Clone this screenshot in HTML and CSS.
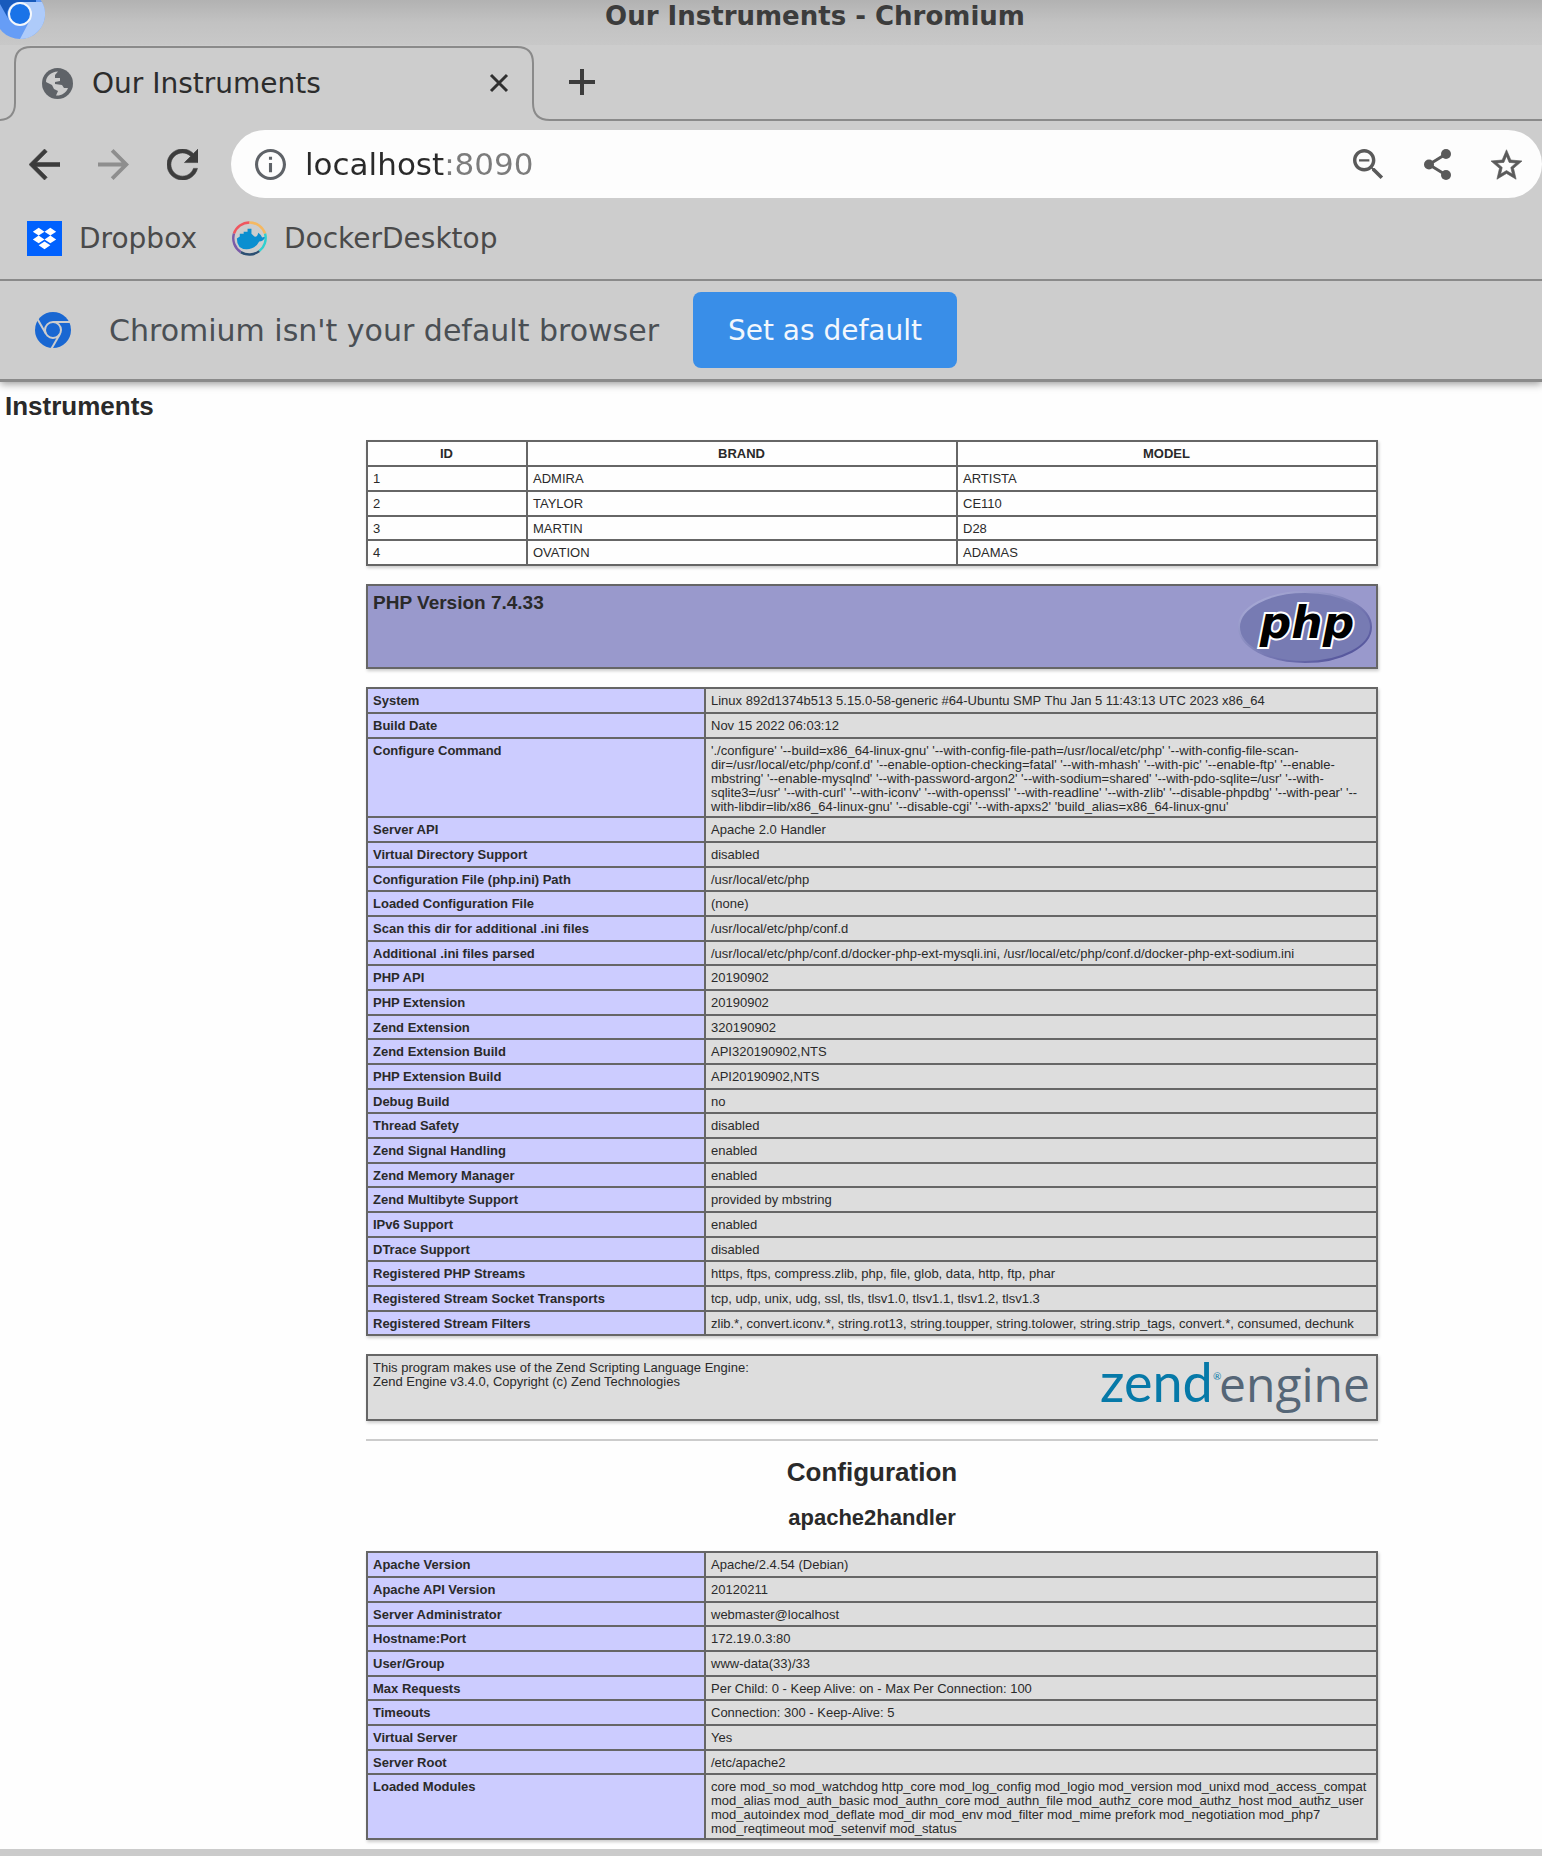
FILE: index.html
```html
<!DOCTYPE html>
<html lang="en">
<head>
<meta charset="utf-8">
<title>Our Instruments</title>
<link rel="stylesheet" href="styles.css">
</head>
<body>
<header class="browser">
  <div class="titlebar">
    <svg class="app-icon" viewBox="0 0 45 40" aria-hidden="true">
      <circle cx="20" cy="14" r="25" fill="#669df6"/>
      <path d="M20 2H42A25 25 0 0 1 20 39L30 20Z" fill="#aecbfa"/>
      <path d="M0 0H36V2H20A12 12 0 0 0 9 20L0 4Z" fill="#185abc"/>
      <circle cx="20" cy="14" r="11" fill="#1a73e8" stroke="#f4f7fb" stroke-width="2"/>
    </svg>
    <p class="window-title">Our Instruments - Chromium</p>
  </div>
  <div class="tabstrip">
    <div class="tab">
      <svg class="tab-shape" viewBox="0 0 550 76" aria-hidden="true"><path d="M0 75Q15 74 15 58V18Q15 2 31 2H517Q533 2 533 18V58Q533 75 550 75" fill="none" stroke="#8a8a8a" stroke-width="2"/></svg>
      <svg class="globe" viewBox="0 0 31 31" aria-hidden="true"><circle cx="15.500" cy="15.500" r="15.500" fill="#5f6368"/><path fill="#cdcdcd" d="M4 14C4 8 9 4 16 3.500L13 7L13 10L18 10L18 13L13 14L13 16L20 17L22 20L26 20C24 25 19 28 14 27.500L16 23L12 21L10 17Z"/></svg>
      <span class="tab-title">Our Instruments</span>
      <button class="icon-button close" aria-label="Close tab"><svg viewBox="0 0 20 20"><path d="M2 2L18 18M18 2L2 18" stroke="#303030" stroke-width="3"/></svg></button>
    </div>
    <div class="strip-rest">
      <button class="icon-button plus" aria-label="New tab"><svg viewBox="0 0 26 26"><path d="M13 0V26M0 13H26" stroke="#3c3c3c" stroke-width="4"/></svg></button>
    </div>
  </div>
  <nav class="toolbar">
    <div class="nav-buttons">
      <button class="icon-button" aria-label="Back"><svg viewBox="4 4 16 16"><path fill="#3c3c3c" stroke="#3c3c3c" stroke-width=".3" d="M20 11H7.830l5.590-5.590L12 4l-8 8 8 8 1.410-1.410L7.830 13H20v-2z"/></svg></button>
      <button class="icon-button" aria-label="Forward"><svg viewBox="4 4 16 16"><path fill="#8e8e8e" d="M12 4l-1.410 1.410L16.170 11H4v2h12.170l-5.580 5.590L12 20l8-8z"/></svg></button>
      <button class="icon-button" aria-label="Reload"><svg viewBox="4 4 16 16"><path fill="#3c3c3c" stroke="#3c3c3c" stroke-width=".3" d="M17.650 6.350C16.200 4.900 14.210 4 12 4c-4.420 0-7.990 3.580-7.990 8s3.570 8 7.990 8c3.730 0 6.840-2.550 7.730-6h-2.080c-.82 2.330-3.040 4-5.650 4-3.310 0-6-2.690-6-6s2.690-6 6-6c1.660 0 3.140.69 4.220 1.780L13 11h7V4l-2.350 2.350z"/></svg></button>
    </div>
    <div class="omnibox">
      <button class="icon-button" aria-label="Site information"><svg viewBox="2 2 20 20"><path fill="#5f6368" d="M11 7h2v2h-2zm0 4h2v6h-2zm1-9C6.480 2 2 6.480 2 12s4.480 10 10 10 10-4.480 10-10S17.520 2 12 2zm0 18c-4.410 0-8-3.590-8-8s3.590-8 8-8 8 3.590 8 8-3.590 8-8 8z"/></svg></button>
      <input class="url" type="text" value="localhost:8090" aria-label="Address">
      <div class="page-actions">
        <button class="icon-button" aria-label="Zoom"><svg viewBox="3 3 18 18"><path fill="#5a5a5a" d="M15.500 14h-.79l-.28-.27C15.410 12.590 16 11.110 16 9.500 16 5.910 13.090 3 9.500 3S3 5.910 3 9.500 5.910 16 9.500 16c1.610 0 3.090-.59 4.230-1.570l.27.28v.79l5 4.990L20.490 19l-4.990-5zm-6 0C7.010 14 5 11.990 5 9.500S7.010 5 9.500 5 14 7.010 14 9.500 11.990 14 9.500 14zM6.500 9h6v1.200h-6z"/></svg></button>
        <button class="icon-button" aria-label="Share"><svg viewBox="0 0 31 31"><path d="M24 5L7 15.500L24 26" fill="none" stroke="#5a5a5a" stroke-width="3"/><g fill="#5a5a5a"><circle cx="24" cy="5" r="5"/><circle cx="7" cy="15.500" r="5"/><circle cx="24" cy="26" r="5"/></g></svg></button>
        <button class="icon-button" aria-label="Bookmark"><svg viewBox="2 2 20 19"><path fill="#5a5a5a" stroke="#5a5a5a" stroke-width=".4" d="M22 9.240l-7.190-.62L12 2 9.190 8.630 2 9.240l5.460 4.730L5.820 21 12 17.270 18.180 21l-1.630-7.030L22 9.240zM12 15.400l-3.760 2.270 1-4.280-3.320-2.880 4.380-.38L12 6.100l1.710 4.040 4.380.38-3.320 2.880 1 4.280L12 15.400z"/></svg></button>
      </div>
    </div>
  </nav>
  <nav class="bookmarks">
    <a class="bookmark" href="#dropbox"><svg viewBox="0 0 36 36" aria-hidden="true"><path fill="#0061fe" d="M0 0H36V36H0Z"/><path fill="#fff" d="M12 7L18 11 12 15 6 11ZM24 7L30 11 24 15 18 11ZM12 15L18 19 12 23 6 19ZM24 15L30 19 24 23 18 19ZM18 21L24 25 18 29 12 25Z"/></svg>Dropbox</a>
    <a class="bookmark" href="#docker"><svg viewBox="0 0 36 36" aria-hidden="true"><g fill="none" stroke-width="2.500"><path d="M2 13A17 17 0 0 1 18 1.500" stroke="#f0565f"/><path d="M18 1.500A17 17 0 0 1 34 13" stroke="#f5b860"/><path d="M34 13A17 17 0 0 1 28 31" stroke="#2ed0d0"/><path d="M28 31A17 17 0 0 1 9 32" stroke="#2c4f72"/><path d="M9 32A17 17 0 0 1 2 13" stroke="#7a5ba8"/></g><path fill="#0b8fd0" d="M5 18L8 16V13H12V11H16V8H20V13L23 16Q26 17 27 12Q30 14 31 17Q33 16 34 17Q32 21 28 21Q24 29 15 29Q5 29 5 18Z"/></svg>DockerDesktop</a>
  </nav>
  <div class="infobar">
    <svg class="chromium" viewBox="0 0 36 36" aria-hidden="true"><circle cx="18" cy="18" r="18" fill="#1967d2"/><g fill="none" stroke="#cdcdcd" stroke-width="2"><circle cx="18" cy="18" r="8"/><path d="M18 10H35"/><path d="M18 10H35" transform="rotate(120 18 18)"/><path d="M18 10H35" transform="rotate(240 18 18)"/></g></svg>
    <span class="infobar-text">Chromium isn't your default browser</span>
    <button class="set-default">Set as default</button>
  </div>
</header>
<main class="page">
  <h1 class="page-title">Instruments</h1>
  <div class="center">
    <table class="data">
      <colgroup><col class="col-id"><col class="col-brand"><col></colgroup>
      <thead><tr><th scope="col">ID</th><th scope="col">BRAND</th><th scope="col">MODEL</th></tr></thead>
      <tbody>
        <tr><td>1</td><td>ADMIRA</td><td>ARTISTA</td></tr>
        <tr><td>2</td><td>TAYLOR</td><td>CE110</td></tr>
        <tr><td>3</td><td>MARTIN</td><td>D28</td></tr>
        <tr><td>4</td><td>OVATION</td><td>ADAMAS</td></tr>
      </tbody>
    </table>
    <section class="box version">
      <h2>PHP Version 7.4.33</h2>
      <svg class="php-logo" viewBox="0 0 134 72" role="img" aria-label="PHP logo">
        <defs><linearGradient id="rim" x1="0" y1="0" x2="1" y2="1"><stop offset="0" stop-color="#b4b6de"/><stop offset=".45" stop-color="#8285bb"/><stop offset="1" stop-color="#484893"/></linearGradient></defs>
        <ellipse cx="67" cy="36" rx="66" ry="35" fill="#777bb3" stroke="url(#rim)" stroke-width="2"/>
        <text class="php-word" x="69" y="47" text-anchor="middle">php</text>
      </svg>
    </section>
    <table class="data info">
      <colgroup><col class="col-key"><col></colgroup>
      <tbody>
        <tr><th scope="row">System</th><td>Linux 892d1374b513 5.15.0-58-generic #64-Ubuntu SMP Thu Jan 5 11:43:13 UTC 2023 x86_64</td></tr>
        <tr><th scope="row">Build Date</th><td>Nov 15 2022 06:03:12</td></tr>
        <tr><th scope="row">Configure Command</th><td>'./configure' '--build=x86_64-linux-gnu' '--with-config-file-path=/usr/local/etc/php' '--with-config-file-scan-<br>dir=/usr/local/etc/php/conf.d' '--enable-option-checking=fatal' '--with-mhash' '--with-pic' '--enable-ftp' '--enable-<br>mbstring' '--enable-mysqlnd' '--with-password-argon2' '--with-sodium=shared' '--with-pdo-sqlite=/usr' '--with-<br>sqlite3=/usr' '--with-curl' '--with-iconv' '--with-openssl' '--with-readline' '--with-zlib' '--disable-phpdbg' '--with-pear' '--<br>with-libdir=lib/x86_64-linux-gnu' '--disable-cgi' '--with-apxs2' 'build_alias=x86_64-linux-gnu'</td></tr>
        <tr><th scope="row">Server API</th><td>Apache 2.0 Handler</td></tr>
        <tr><th scope="row">Virtual Directory Support</th><td>disabled</td></tr>
        <tr><th scope="row">Configuration File (php.ini) Path</th><td>/usr/local/etc/php</td></tr>
        <tr><th scope="row">Loaded Configuration File</th><td>(none)</td></tr>
        <tr><th scope="row">Scan this dir for additional .ini files</th><td>/usr/local/etc/php/conf.d</td></tr>
        <tr><th scope="row">Additional .ini files parsed</th><td>/usr/local/etc/php/conf.d/docker-php-ext-mysqli.ini, /usr/local/etc/php/conf.d/docker-php-ext-sodium.ini</td></tr>
        <tr><th scope="row">PHP API</th><td>20190902</td></tr>
        <tr><th scope="row">PHP Extension</th><td>20190902</td></tr>
        <tr><th scope="row">Zend Extension</th><td>320190902</td></tr>
        <tr><th scope="row">Zend Extension Build</th><td>API320190902,NTS</td></tr>
        <tr><th scope="row">PHP Extension Build</th><td>API20190902,NTS</td></tr>
        <tr><th scope="row">Debug Build</th><td>no</td></tr>
        <tr><th scope="row">Thread Safety</th><td>disabled</td></tr>
        <tr><th scope="row">Zend Signal Handling</th><td>enabled</td></tr>
        <tr><th scope="row">Zend Memory Manager</th><td>enabled</td></tr>
        <tr><th scope="row">Zend Multibyte Support</th><td>provided by mbstring</td></tr>
        <tr><th scope="row">IPv6 Support</th><td>enabled</td></tr>
        <tr><th scope="row">DTrace Support</th><td>disabled</td></tr>
        <tr><th scope="row">Registered PHP Streams</th><td>https, ftps, compress.zlib, php, file, glob, data, http, ftp, phar</td></tr>
        <tr><th scope="row">Registered Stream Socket Transports</th><td>tcp, udp, unix, udg, ssl, tls, tlsv1.0, tlsv1.1, tlsv1.2, tlsv1.3</td></tr>
        <tr><th scope="row">Registered Stream Filters</th><td>zlib.*, convert.iconv.*, string.rot13, string.toupper, string.tolower, string.strip_tags, convert.*, consumed, dechunk</td></tr>
      </tbody>
    </table>
    <section class="box engine">
      <p>This program makes use of the Zend Scripting Language Engine:<br>Zend Engine v3.4.0, Copyright (c) Zend Technologies</p>
      <svg class="zend-logo" viewBox="0 0 274 60" role="img" aria-label="Zend Engine logo">
        <text class="zend-word" x="2" y="44">zend</text>
        <text class="zend-mark" x="115" y="22">®</text>
        <text class="engine-word" x="121" y="44">engine</text>
      </svg>
    </section>
    <hr>
    <h1 class="heading">Configuration</h1>
    <h2 class="subheading">apache2handler</h2>
    <table class="data info">
      <colgroup><col class="col-key"><col></colgroup>
      <tbody>
        <tr><th scope="row">Apache Version</th><td>Apache/2.4.54 (Debian)</td></tr>
        <tr><th scope="row">Apache API Version</th><td>20120211</td></tr>
        <tr><th scope="row">Server Administrator</th><td>webmaster@localhost</td></tr>
        <tr><th scope="row">Hostname:Port</th><td>172.19.0.3:80</td></tr>
        <tr><th scope="row">User/Group</th><td>www-data(33)/33</td></tr>
        <tr><th scope="row">Max Requests</th><td>Per Child: 0 - Keep Alive: on - Max Per Connection: 100</td></tr>
        <tr><th scope="row">Timeouts</th><td>Connection: 300 - Keep-Alive: 5</td></tr>
        <tr><th scope="row">Virtual Server</th><td>Yes</td></tr>
        <tr><th scope="row">Server Root</th><td>/etc/apache2</td></tr>
        <tr><th scope="row">Loaded Modules</th><td>core mod_so mod_watchdog http_core mod_log_config mod_logio mod_version mod_unixd mod_access_compat<br>mod_alias mod_auth_basic mod_authn_core mod_authn_file mod_authz_core mod_authz_host mod_authz_user<br>mod_autoindex mod_deflate mod_dir mod_env mod_filter mod_mime prefork mod_negotiation mod_php7<br>mod_reqtimeout mod_setenvif mod_status</td></tr>
      </tbody>
    </table>
  </div>
</main>
<footer class="window-edge"></footer>
</body>
</html>
```
FILE: styles.css
```css
* { box-sizing: border-box; }

body {
  margin: 0;
  min-height: 100vh;
  display: flex;
  flex-direction: column;
  background: #fefefe;
  color: #2a2a2a;
  font-family: "Liberation Sans", Arial, sans-serif;
  overflow-x: hidden;
}

h1, h2, p { margin: 0; }
svg { display: block; }

/* Browser frame */
.browser {
  background: #cdcdcd;
  font-family: "DejaVu Sans", sans-serif;
  color: #3c3c3c;
  border-bottom: 3px solid #8a8a8a;
  box-shadow: 0 2px 8px rgba(0, 0, 0, .4);
}

.titlebar {
  display: grid;
  grid-template-columns: 45px 1fr;
  height: 45px;
  background: linear-gradient(#b2b2b2, #c2c2c2 50%, #c8c8c8);
}
.app-icon { width: 45px; height: 40px; }
.window-title {
  padding-left: 43px;
  font-size: 26px;
  line-height: 32px;
  font-weight: bold;
  text-align: center;
}

.icon-button {
  flex: none;
  padding: 0;
  border: 0;
  background: none;
}
.icon-button svg { width: 31px; height: 31px; }

.tabstrip { display: flex; height: 76px; }
.tab {
  position: relative;
  flex: none;
  width: 550px;
  display: flex;
  align-items: center;
  padding: 0 41px 0 42px;
}
.tab-shape { position: absolute; inset: 0; width: 100%; height: 100%; }
.globe { width: 31px; height: 31px; margin-right: 19px; }
.tab-title { flex: 1; font-size: 28px; color: #2c2c2c; }
.close svg { width: 20px; height: 20px; }
.strip-rest {
  flex: 1;
  display: flex;
  align-items: center;
  padding-left: 19px;
  border-bottom: 2px solid #8a8a8a;
}
.plus svg { width: 26px; height: 26px; }

.toolbar {
  display: flex;
  align-items: center;
  padding-top: 9px;
}
.nav-buttons { display: flex; gap: 38px; padding: 0 33px 0 29px; }
.omnibox {
  flex: 1;
  display: flex;
  align-items: center;
  height: 68px;
  padding: 0 20px 0 24px;
  border-radius: 34px;
  background: #fdfdfd;
}
.url {
  flex: 1;
  min-width: 0;
  margin-left: 19px;
  padding: 0;
  border: 0;
  font: 31px "DejaVu Sans", sans-serif;
  color: transparent;
  caret-color: #222;
  background: linear-gradient(90deg, #2a2a2a 139px, #7c7c7c 139px);
  background-clip: text;
}
.page-actions { display: flex; gap: 38px; }

.bookmarks {
  display: flex;
  gap: 35px;
  height: 83px;
  padding-left: 27px;
  border-bottom: 2px solid #8a8a8a;
}
.bookmark {
  display: flex;
  align-items: center;
  gap: 17px;
  color: #4a4a4a;
  font-size: 28px;
  text-decoration: none;
}
.bookmark svg { width: 35px; height: 35px; }

.infobar {
  display: flex;
  align-items: center;
  padding: 11px 35px;
}
.chromium { width: 36px; height: 36px; }
.infobar-text {
  margin: 0 34px 0 38px;
  font-size: 30px;
  color: #4a4f54;
}
.set-default {
  padding: 0 35px;
  height: 76px;
  border: 0;
  border-radius: 8px;
  background: #398ee8;
  color: #f2f7fd;
  font: 28px "DejaVu Sans", sans-serif;
}

/* Page content */
.page { padding: 8px 164px 9px 5px; }
.page-title { font-size: 26px; line-height: 32px; margin-bottom: 18px; }
.center { max-width: 1012px; margin-left: auto; }

.data {
  width: 100%;
  table-layout: fixed;
  border-collapse: collapse;
  font-size: 13px;
  line-height: 14px;
  box-shadow: 1px 2px 3px #ccc;
}
.data tr { height: 25px; }
.data tr:nth-child(3n) { height: 24px; }
.data th, .data td {
  padding: 5px 6px 2px 5px;
  border: 2px solid #666;
  vertical-align: baseline;
}
.data td { text-align: left; white-space: nowrap; }
.col-id { width: 160px; }
.col-brand { width: 430px; }
.col-key { width: 338px; }
.info th { background: #ccccff; text-align: left; }
.info td { background: #ddd; }

.box {
  display: flex;
  justify-content: space-between;
  margin: 18px 0;
  border: 2px solid #666;
  box-shadow: 1px 2px 3px #ccc;
}
.version { padding: 5px 4px 4px 5px; background: #9999cc; }
.version h2 { font-size: 19px; line-height: 24px; }
.php-logo { width: 134px; height: 72px; }
.php-word {
  font: italic bold 44px "DejaVu Sans", sans-serif;
  fill: #000;
  stroke: #fff;
  stroke-width: 4px;
  paint-order: stroke;
}
.engine { padding: 2px 4px 1px 5px; background: #ddd; }
.engine p { padding-top: 3px; font-size: 13px; line-height: 14px; }
.zend-logo { width: 274px; height: 60px; overflow: visible; }
.zend-word { font: 54px Lato, sans-serif; fill: #0679a8; }
.zend-mark { font: 10px Lato, sans-serif; fill: #0679a8; }
.engine-word { font: 48px "Open Sans", sans-serif; fill: #556677; }

hr { height: 2px; margin: 18px 0 16px; border: 0; background: #ccc; }
.heading { font-size: 26px; line-height: 30px; text-align: center; }
.subheading { margin: 18px 0 20px; font-size: 22px; line-height: 26px; text-align: center; }

.window-edge { flex: 1; background: #cbcbcb; }
```
